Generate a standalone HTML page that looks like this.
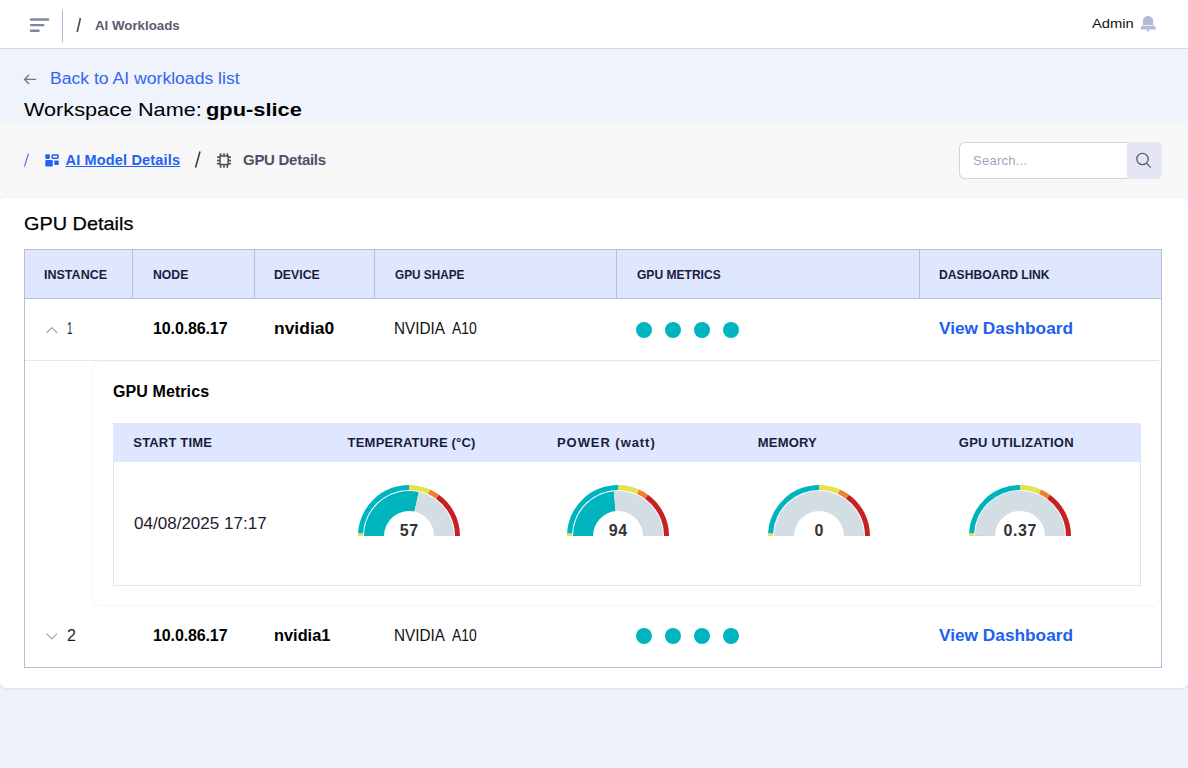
<!DOCTYPE html><html><head><meta charset="utf-8"><style>
html,body{margin:0;padding:0;}
body{width:1188px;height:768px;position:relative;overflow:hidden;background:#eef2fb;font-family:'Liberation Sans', sans-serif;}
.t{position:absolute;white-space:nowrap;line-height:1;}
</style></head><body>
<div style="position:absolute;left:0px;top:0px;width:1188px;height:48px;background:#fff;"></div>
<div style="position:absolute;left:0px;top:48px;width:1188px;height:1px;background:#d4d7e0;"></div>
<div style="position:absolute;left:0px;top:49px;width:1188px;height:74px;background:#eff3fb;"></div>
<div style="position:absolute;left:0px;top:123px;width:1188px;height:75px;background:#f7f7f7;"></div>
<div style="position:absolute;left:0px;top:198px;width:1188px;height:490px;background:#fff;border-radius:4px 4px 6px 6px;box-shadow:0 1px 3px rgba(0,0,0,0.09);"></div>
<svg style="position:absolute;left:0;top:0" width="200" height="48"><g stroke="#80869f" stroke-width="2.4" stroke-linecap="round"><line x1="31" y1="19.5" x2="48" y2="19.5"/><line x1="31" y1="25.1" x2="43.3" y2="25.1"/><line x1="31" y1="30.7" x2="38.6" y2="30.7"/></g><line x1="62.5" y1="10" x2="62.5" y2="42" stroke="#b3b6d6" stroke-width="1"/><line x1="77.2" y1="32" x2="80.4" y2="18" stroke="#4d5164" stroke-width="1.7"/></svg>
<div class="t " style="left:95px;top:19px;font-size:13.5px;font-weight:bold;color:#585d71;letter-spacing:0px;transform:scaleX(0.985);transform-origin:0 0;">AI Workloads</div>
<div class="t " style="left:1092px;top:17px;font-size:13px;font-weight:normal;color:#111;letter-spacing:0px;transform:scaleX(1.133);transform-origin:0 0;">Admin</div>
<svg style="position:absolute;left:1138px;top:14px" width="20" height="20" viewBox="0 0 20 20"><g fill="#b6b8da"><path d="M4.9,10.9 L4.9,7 A5.2,5.1 0 0 1 15.3,7 L15.3,10.9 Z"/><path d="M3.4,11.7 L16.9,11.7 L17.9,15.5 L2.3,15.5 Z"/><path d="M8,15.5 L12.2,15.5 L10.1,17.9 Z"/></g></svg>
<svg style="position:absolute;left:20px;top:70px" width="20" height="20"><g stroke="#73778c" stroke-width="1.4" fill="none" stroke-linecap="round" stroke-linejoin="round"><line x1="4.6" y1="9.4" x2="15.6" y2="9.4"/><polyline points="8.6,5.3 4.6,9.4 8.6,13.5"/></g></svg>
<div class="t " style="left:50px;top:71px;font-size:16px;font-weight:normal;color:#3565f0;letter-spacing:0px;transform:scaleX(1.099);transform-origin:0 0;">Back to AI workloads list</div>
<div class="t " style="left:24px;top:100px;font-size:19px;font-weight:normal;color:#000;letter-spacing:0px;transform:scaleX(1.14);transform-origin:0 0;">Workspace Name:</div>
<div class="t " style="left:205.5px;top:100px;font-size:19px;font-weight:bold;color:#000;letter-spacing:0px;transform:scaleX(1.15);transform-origin:0 0;">gpu-slice</div>
<svg style="position:absolute;left:0;top:140px" width="340" height="40"><line x1="24.5" y1="26.5" x2="28.5" y2="13.5" stroke="#4f6ff0" stroke-width="1.1"/><g fill="#2262f2"><rect x="45.3" y="14.2" width="4.6" height="4.7" rx="0.8"/><rect x="52.15" y="14.95" width="5.9" height="3.2" rx="0.6" fill="none" stroke="#2262f2" stroke-width="1.5"/><rect x="45.3" y="20.1" width="7.5" height="6.3" rx="1"/><rect x="54.2" y="20.5" width="4.6" height="4.4" rx="0.8"/></g><line x1="195.5" y1="27.5" x2="200" y2="11.5" stroke="#3b3f52" stroke-width="1.6"/><g fill="none" stroke="#4a4e5f" stroke-width="1.5"><rect x="220.05" y="16.05" width="8.1" height="8.5"/></g><g stroke="#4a4e5f" stroke-width="1.6"><line x1="220.6" y1="13.3" x2="220.6" y2="16"/><line x1="224" y1="13.3" x2="224" y2="16"/><line x1="227.3" y1="13.3" x2="227.3" y2="16"/><line x1="220.6" y1="25" x2="220.6" y2="27.8"/><line x1="224" y1="25" x2="224" y2="27.8"/><line x1="227.3" y1="25" x2="227.3" y2="27.8"/><line x1="217" y1="17.2" x2="220" y2="17.2"/><line x1="217" y1="20.5" x2="220" y2="20.5"/><line x1="217" y1="23.7" x2="220" y2="23.7"/><line x1="228.5" y1="17.2" x2="231" y2="17.2"/><line x1="228.5" y1="20.5" x2="231" y2="20.5"/><line x1="228.5" y1="23.7" x2="231" y2="23.7"/></g></svg>
<div class="t " style="left:65.5px;top:153px;font-size:14.5px;font-weight:bold;color:#2262f2;letter-spacing:0.17px;text-decoration:underline;text-underline-offset:1px;">AI Model Details</div>
<div class="t " style="left:243px;top:152px;font-size:15px;font-weight:bold;color:#4c5064;letter-spacing:-0.28px;">GPU Details</div>
<div style="position:absolute;left:959px;top:142px;width:168px;height:37px;box-sizing:border-box;background:#fff;border:1px solid #d2d5df;border-right:none;border-radius:6px 0 0 6px;"></div>
<div style="position:absolute;left:1127px;top:142px;width:35px;height:37px;background:#e4e7f3;border-radius:0 6px 6px 0;"></div>
<svg style="position:absolute;left:1130px;top:147px" width="28" height="28"><g fill="none" stroke="#5b5f6e" stroke-width="1.3"><circle cx="12.5" cy="12" r="5.7"/><line x1="16.6" y1="16.3" x2="20.8" y2="20.6"/></g></svg>
<div class="t " style="left:973px;top:154px;font-size:13px;font-weight:normal;color:#a1a5b8;letter-spacing:0.25px;">Search...</div>
<div class="t " style="left:24px;top:214px;font-size:19px;font-weight:normal;color:#000;letter-spacing:0px;-webkit-text-stroke:0.25px #000;transform:scaleX(1.046);transform-origin:0 0;">GPU Details</div>
<div style="position:absolute;left:24px;top:249px;width:1138px;height:419px;box-sizing:border-box;border:1px solid #b9bbdb;background:#fff;"></div>
<div style="position:absolute;left:25px;top:250px;width:1136px;height:48px;background:#dee7fd;"></div>
<div style="position:absolute;left:24px;top:298px;width:1138px;height:1px;background:#b9bbdb;"></div>
<div style="position:absolute;left:132px;top:250px;width:1px;height:48px;background:#b9bbdb;"></div>
<div style="position:absolute;left:254px;top:250px;width:1px;height:48px;background:#b9bbdb;"></div>
<div style="position:absolute;left:374px;top:250px;width:1px;height:48px;background:#b9bbdb;"></div>
<div style="position:absolute;left:616px;top:250px;width:1px;height:48px;background:#b9bbdb;"></div>
<div style="position:absolute;left:919px;top:250px;width:1px;height:48px;background:#b9bbdb;"></div>
<div class="t " style="left:44.3px;top:268px;font-size:13px;font-weight:bold;color:#1b1c3d;letter-spacing:0px;transform:scaleX(0.963);transform-origin:0 0;">INSTANCE</div>
<div class="t " style="left:153px;top:268px;font-size:13px;font-weight:bold;color:#1b1c3d;letter-spacing:0px;transform:scaleX(0.94);transform-origin:0 0;">NODE</div>
<div class="t " style="left:274.2px;top:268px;font-size:13px;font-weight:bold;color:#1b1c3d;letter-spacing:0px;transform:scaleX(0.945);transform-origin:0 0;">DEVICE</div>
<div class="t " style="left:395.2px;top:268px;font-size:13px;font-weight:bold;color:#1b1c3d;letter-spacing:0px;transform:scaleX(0.906);transform-origin:0 0;">GPU SHAPE</div>
<div class="t " style="left:637.2px;top:268px;font-size:13px;font-weight:bold;color:#1b1c3d;letter-spacing:0px;transform:scaleX(0.927);transform-origin:0 0;">GPU METRICS</div>
<div class="t " style="left:939.3px;top:268px;font-size:13px;font-weight:bold;color:#1b1c3d;letter-spacing:0px;transform:scaleX(0.934);transform-origin:0 0;">DASHBOARD LINK</div>
<div style="position:absolute;left:25px;top:360px;width:1136px;height:1px;background:#e6e8ef;"></div>
<svg style="position:absolute;left:44px;top:327px" width="16" height="10"><polyline points="2.5,6 7.8,0.7 13.1,6" fill="none" stroke="#a0a3b8" stroke-width="1.2"/></svg>
<div class="t " style="left:66.5px;top:321px;font-size:16px;font-weight:normal;color:#1c1c30;letter-spacing:0px;transform:scaleX(0.62);transform-origin:0 0;">1</div>
<div class="t " style="left:153px;top:321px;font-size:16px;font-weight:bold;color:#000;letter-spacing:-0.12px;">10.0.86.17</div>
<div class="t " style="left:273.7px;top:321px;font-size:16px;font-weight:bold;color:#000;letter-spacing:0px;transform:scaleX(1.091);transform-origin:0 0;">nvidia0</div>
<div class="t " style="left:394px;top:321px;font-size:16px;font-weight:normal;color:#111;letter-spacing:0px;transform:scaleX(0.955);transform-origin:0 0;">NVIDIA</div>
<div class="t " style="left:451.5px;top:321px;font-size:16px;font-weight:normal;color:#111;letter-spacing:0px;transform:scaleX(0.87);transform-origin:0 0;">A10</div>
<div style="position:absolute;left:635.8px;top:322px;width:16px;height:16px;border-radius:50%;background:#00b5bf;"></div>
<div style="position:absolute;left:664.9px;top:322px;width:16px;height:16px;border-radius:50%;background:#00b5bf;"></div>
<div style="position:absolute;left:693.9px;top:322px;width:16px;height:16px;border-radius:50%;background:#00b5bf;"></div>
<div style="position:absolute;left:722.9px;top:322px;width:16px;height:16px;border-radius:50%;background:#00b5bf;"></div>
<div class="t " style="left:939px;top:321px;font-size:16px;font-weight:bold;color:#2060f0;letter-spacing:0px;transform:scaleX(1.079);transform-origin:0 0;">View Dashboard</div>
<div style="position:absolute;left:93px;top:362px;width:1067px;height:243px;background:#fff;border-radius:6px;box-shadow:0 0 2px rgba(0,0,0,0.12);"></div>
<div class="t " style="left:113px;top:384px;font-size:16px;font-weight:bold;color:#000;letter-spacing:0.09px;">GPU Metrics</div>
<div style="position:absolute;left:113px;top:423px;width:1028px;height:163px;box-sizing:border-box;border:1px solid #e3e5eb;background:#fff;"></div>
<div style="position:absolute;left:113px;top:423px;width:1028px;height:39px;background:#dee7fd;"></div>
<div class="t " style="left:133.3px;top:436px;font-size:13px;font-weight:bold;color:#1b1c3d;letter-spacing:0.17px;">START TIME</div>
<div class="t " style="left:347.6px;top:436px;font-size:13px;font-weight:bold;color:#1b1c3d;letter-spacing:0.2px;">TEMPERATURE (°C)</div>
<div class="t " style="left:557px;top:436px;font-size:13px;font-weight:bold;color:#1b1c3d;letter-spacing:0.94px;">POWER (watt)</div>
<div class="t " style="left:757.8px;top:436px;font-size:13px;font-weight:bold;color:#1b1c3d;letter-spacing:0.18px;">MEMORY</div>
<div class="t " style="left:958.8px;top:436px;font-size:13px;font-weight:bold;color:#1b1c3d;letter-spacing:0.22px;">GPU UTILIZATION</div>
<div class="t " style="left:133.8px;top:515px;font-size:16.5px;font-weight:normal;color:#1d2030;letter-spacing:0px;transform:scaleX(1.033);transform-origin:0 0;">04/08/2025 17:17</div>
<svg style="position:absolute;left:0;top:0" width="1188" height="768"><path d="M358.00,536.00 A51,51 0 0 1 358.08,533.12 L363.07,533.40 A46,46 0 0 0 363.00,536.00 Z" fill="#e6e24c"/><path d="M358.08,533.12 A51,51 0 0 1 409.00,485.00 L409.00,490.00 A46,46 0 0 0 363.07,533.40 Z" fill="#00b4be"/><path d="M409.00,485.00 A51,51 0 0 1 429.99,489.52 L427.93,494.08 A46,46 0 0 0 409.00,490.00 Z" fill="#e6e24c"/><path d="M429.99,489.52 A51,51 0 0 1 438.98,494.74 L436.04,498.79 A46,46 0 0 0 427.93,494.08 Z" fill="#ee8232"/><path d="M438.98,494.74 A51,51 0 0 1 460.00,536.00 L455.00,536.00 A46,46 0 0 0 436.04,498.79 Z" fill="#c72222"/><path d="M364.00,536.00 A45,45 0 0 1 418.82,492.08 L414.45,511.60 A25,25 0 0 0 384.00,536.00 Z" fill="#00b4be"/><path d="M418.82,492.08 A45,45 0 0 1 454.00,536.00 L434.00,536.00 A25,25 0 0 0 414.45,511.60 Z" fill="#d2dde4"/><path d="M567.00,536.00 A51,51 0 0 1 567.08,533.12 L572.07,533.40 A46,46 0 0 0 572.00,536.00 Z" fill="#e6e24c"/><path d="M567.08,533.12 A51,51 0 0 1 618.00,485.00 L618.00,490.00 A46,46 0 0 0 572.07,533.40 Z" fill="#00b4be"/><path d="M618.00,485.00 A51,51 0 0 1 638.99,489.52 L636.93,494.08 A46,46 0 0 0 618.00,490.00 Z" fill="#e6e24c"/><path d="M638.99,489.52 A51,51 0 0 1 647.98,494.74 L645.04,498.79 A46,46 0 0 0 636.93,494.08 Z" fill="#ee8232"/><path d="M647.98,494.74 A51,51 0 0 1 669.00,536.00 L664.00,536.00 A46,46 0 0 0 645.04,498.79 Z" fill="#c72222"/><path d="M573.00,536.00 A45,45 0 0 1 613.77,491.20 L615.65,511.11 A25,25 0 0 0 593.00,536.00 Z" fill="#00b4be"/><path d="M613.77,491.20 A45,45 0 0 1 663.00,536.00 L643.00,536.00 A25,25 0 0 0 615.65,511.11 Z" fill="#d2dde4"/><path d="M768.00,536.00 A51,51 0 0 1 768.08,533.12 L773.07,533.40 A46,46 0 0 0 773.00,536.00 Z" fill="#e6e24c"/><path d="M768.08,533.12 A51,51 0 0 1 819.00,485.00 L819.00,490.00 A46,46 0 0 0 773.07,533.40 Z" fill="#00b4be"/><path d="M819.00,485.00 A51,51 0 0 1 839.99,489.52 L837.93,494.08 A46,46 0 0 0 819.00,490.00 Z" fill="#e6e24c"/><path d="M839.99,489.52 A51,51 0 0 1 848.98,494.74 L846.04,498.79 A46,46 0 0 0 837.93,494.08 Z" fill="#ee8232"/><path d="M848.98,494.74 A51,51 0 0 1 870.00,536.00 L865.00,536.00 A46,46 0 0 0 846.04,498.79 Z" fill="#c72222"/><path d="M774.00,536.00 A45,45 0 0 1 864.00,536.00 L844.00,536.00 A25,25 0 0 0 794.00,536.00 Z" fill="#d2dde4"/><path d="M969.00,536.00 A51,51 0 0 1 969.08,533.12 L974.07,533.40 A46,46 0 0 0 974.00,536.00 Z" fill="#e6e24c"/><path d="M969.08,533.12 A51,51 0 0 1 1020.00,485.00 L1020.00,490.00 A46,46 0 0 0 974.07,533.40 Z" fill="#00b4be"/><path d="M1020.00,485.00 A51,51 0 0 1 1040.99,489.52 L1038.93,494.08 A46,46 0 0 0 1020.00,490.00 Z" fill="#e6e24c"/><path d="M1040.99,489.52 A51,51 0 0 1 1049.98,494.74 L1047.04,498.79 A46,46 0 0 0 1038.93,494.08 Z" fill="#ee8232"/><path d="M1049.98,494.74 A51,51 0 0 1 1071.00,536.00 L1066.00,536.00 A46,46 0 0 0 1047.04,498.79 Z" fill="#c72222"/><path d="M975.00,536.00 A45,45 0 0 1 975.00,535.48 L995.00,535.71 A25,25 0 0 0 995.00,536.00 Z" fill="#00b4be"/><path d="M975.00,535.48 A45,45 0 0 1 1065.00,536.00 L1045.00,536.00 A25,25 0 0 0 995.00,535.71 Z" fill="#d2dde4"/></svg>
<div class="t" style="left:369px;width:80px;text-align:center;top:523px;font-size:16px;font-weight:bold;color:#333;letter-spacing:0.6px;text-indent:0.6px;">57</div>
<div class="t" style="left:578px;width:80px;text-align:center;top:523px;font-size:16px;font-weight:bold;color:#333;letter-spacing:0.6px;text-indent:0.6px;">94</div>
<div class="t" style="left:779px;width:80px;text-align:center;top:523px;font-size:16px;font-weight:bold;color:#333;letter-spacing:0.6px;text-indent:0.6px;">0</div>
<div class="t" style="left:980px;width:80px;text-align:center;top:523px;font-size:16px;font-weight:bold;color:#333;letter-spacing:0.6px;text-indent:0.6px;">0.37</div>
<div style="position:absolute;left:330px;top:536px;width:800px;height:10px;background:#fff;"></div>
<svg style="position:absolute;left:44px;top:633px" width="16" height="10"><polyline points="2.5,0.6 7.8,5.9 13.1,0.6" fill="none" stroke="#a0a3b8" stroke-width="1.2"/></svg>
<div class="t " style="left:67px;top:628px;font-size:16px;font-weight:normal;color:#1c1c30;letter-spacing:0px;transform:scaleX(1.0);transform-origin:0 0;">2</div>
<div class="t " style="left:153px;top:628px;font-size:16px;font-weight:bold;color:#000;letter-spacing:-0.12px;">10.0.86.17</div>
<div class="t " style="left:273.7px;top:628px;font-size:16px;font-weight:bold;color:#000;letter-spacing:0px;transform:scaleX(1.022);transform-origin:0 0;">nvidia1</div>
<div class="t " style="left:394px;top:628px;font-size:16px;font-weight:normal;color:#111;letter-spacing:0px;transform:scaleX(0.955);transform-origin:0 0;">NVIDIA</div>
<div class="t " style="left:451.5px;top:628px;font-size:16px;font-weight:normal;color:#111;letter-spacing:0px;transform:scaleX(0.87);transform-origin:0 0;">A10</div>
<div style="position:absolute;left:635.8px;top:628px;width:16px;height:16px;border-radius:50%;background:#00b5bf;"></div>
<div style="position:absolute;left:664.9px;top:628px;width:16px;height:16px;border-radius:50%;background:#00b5bf;"></div>
<div style="position:absolute;left:693.9px;top:628px;width:16px;height:16px;border-radius:50%;background:#00b5bf;"></div>
<div style="position:absolute;left:722.9px;top:628px;width:16px;height:16px;border-radius:50%;background:#00b5bf;"></div>
<div class="t " style="left:939px;top:628px;font-size:16px;font-weight:bold;color:#2060f0;letter-spacing:0px;transform:scaleX(1.079);transform-origin:0 0;">View Dashboard</div>
<div style="position:absolute;left:24px;top:667px;width:1138px;height:1px;background:#b9bbdb;"></div>
</body></html>
